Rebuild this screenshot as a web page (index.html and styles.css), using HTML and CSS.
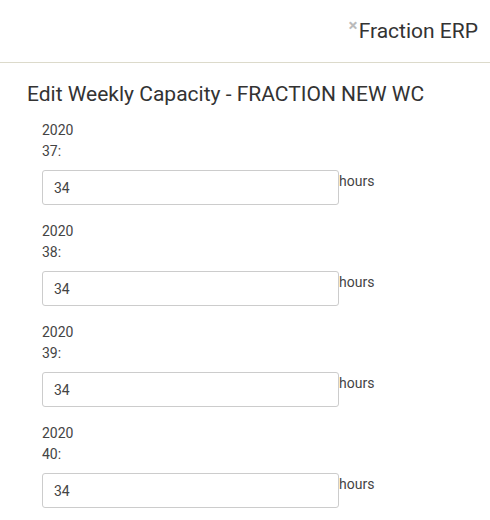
FILE: index.html
```html
<!DOCTYPE html>
<html>
<head>
<meta charset="utf-8">
<link rel="stylesheet" href="styles.css">
</head>
<body>
<header class="topbar">
  <div class="brand"><span class="brand-x">×</span>Fraction ERP</div>
</header>
<main class="content">
  <h1 class="title">Edit Weekly Capacity - FRACTION NEW WC</h1>
  <form class="weeks">
    <div class="week">
      <label class="week-label">2020<br>37:</label>
      <div class="week-row"><input class="week-input" type="text" value="34"><span class="unit">hours</span></div>
    </div>
    <div class="week">
      <label class="week-label">2020<br>38:</label>
      <div class="week-row"><input class="week-input" type="text" value="34"><span class="unit">hours</span></div>
    </div>
    <div class="week">
      <label class="week-label">2020<br>39:</label>
      <div class="week-row"><input class="week-input" type="text" value="34"><span class="unit">hours</span></div>
    </div>
    <div class="week">
      <label class="week-label">2020<br>40:</label>
      <div class="week-row"><input class="week-input" type="text" value="34"><span class="unit">hours</span></div>
    </div>
  </form>
</main>
</body>
</html>
```
FILE: styles.css
```css
html, body {
  margin: 0;
  padding: 0;
  background: #fff;
  font-family: Roboto, "Liberation Sans", sans-serif;
  color: #333;
}
.topbar {
  height: 62px;
  border-bottom: 1px solid #dcdacb;
  display: flex;
  justify-content: flex-end;
  align-items: center;
  padding-right: 12px;
}
.brand {
  font-size: 21px;
  color: #333;
  display: flex;
  align-items: flex-start;
}
.brand-x {
  font-size: 17px;
  color: #bbb;
  line-height: 12px;
  margin-right: 1px;
  font-weight: bold;
}
.content {
  padding: 17px 0 0 27px;
}
.title {
  margin: 0;
  font-size: 21px;
  font-weight: normal;
  line-height: 28px;
  color: #333;
}
.weeks {
  padding-left: 15px;
  margin-top: 12px;
}
.week {
  margin-bottom: 16px;
}
.week-label {
  display: block;
  font-size: 14px;
  line-height: 21px;
  color: #444;
  margin-bottom: 8px;
}
.week-row {
  display: flex;
  align-items: flex-start;
}
.week-input {
  box-sizing: border-box;
  width: 297px;
  height: 35px;
  border: 1px solid #ccc;
  border-radius: 3px;
  padding: 0 11px;
  font-family: Roboto, "Liberation Sans", sans-serif;
  font-size: 14px;
  color: #444;
  margin: 0;
}
.unit {
  font-size: 14px;
  line-height: 20px;
  margin-top: 1px;
  color: #444;
}
```
